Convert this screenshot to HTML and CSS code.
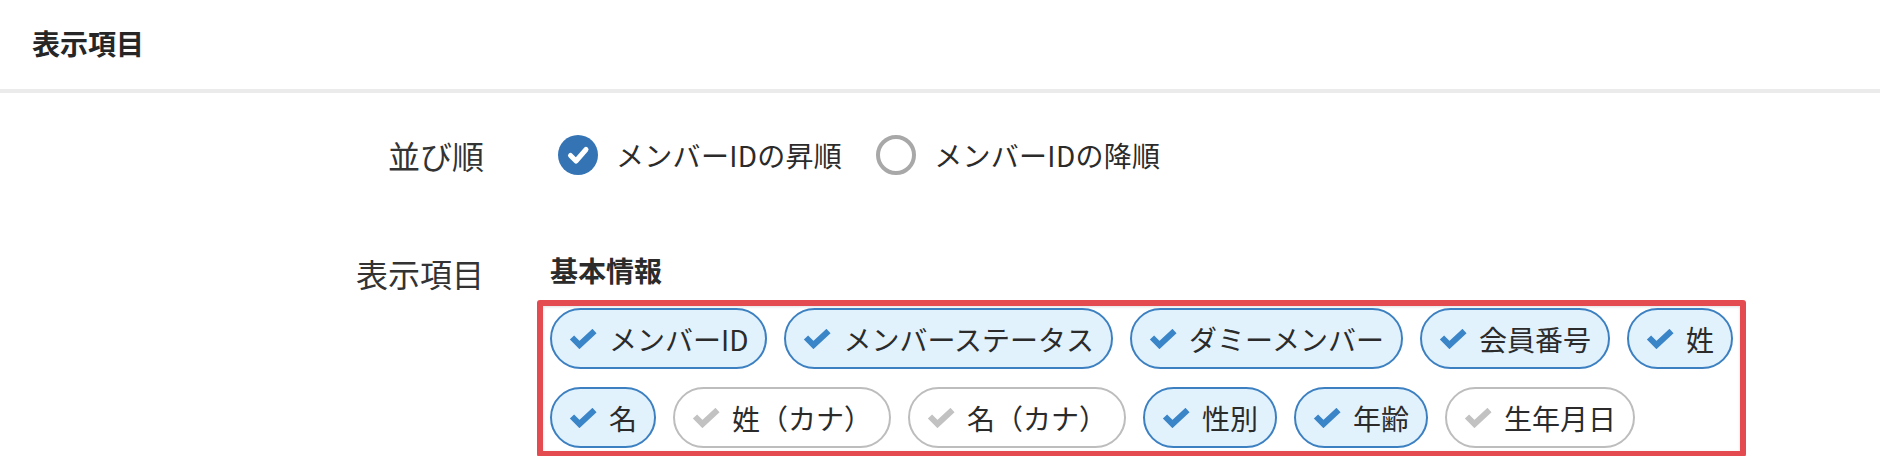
FILE: index.html
```html
<!DOCTYPE html>
<html lang="ja">
<head>
<meta charset="utf-8">
<title>表示項目</title>
<link rel="stylesheet" href="styles.css">
</head>
<body>
<div class="page">
  <header class="section-head">
    <h2 class="section-title">表示項目</h2>
  </header>
  <div class="form">
    <div class="form-row row-sort">
      <div class="form-label">並び順</div>
      <div class="form-field radios">
        <label class="radio">
          <span class="radio-mark checked">
            <svg viewBox="0 0 40 40" width="40" height="40"><polyline points="12.5,20.5 18,26 28,14.5" fill="none" stroke="#fff" stroke-width="5" stroke-linecap="round" stroke-linejoin="round"/></svg>
          </span>
          <span class="radio-text">メンバーIDの昇順</span>
        </label>
        <label class="radio">
          <span class="radio-mark"></span>
          <span class="radio-text">メンバーIDの降順</span>
        </label>
      </div>
    </div>
    <div class="form-row row-items">
      <div class="form-label label-items">表示項目</div>
      <div class="form-field">
        <div class="group-title">基本情報</div>
        <div class="chips">
          <span class="chip on"><svg class="tick" viewBox="0 0 28 20"><polyline points="3,8.5 10.5,16 25.5,2" /></svg>メンバーID</span>
          <span class="chip on"><svg class="tick" viewBox="0 0 28 20"><polyline points="3,8.5 10.5,16 25.5,2" /></svg>メンバーステータス</span>
          <span class="chip on"><svg class="tick" viewBox="0 0 28 20"><polyline points="3,8.5 10.5,16 25.5,2" /></svg>ダミーメンバー</span>
          <span class="chip on"><svg class="tick" viewBox="0 0 28 20"><polyline points="3,8.5 10.5,16 25.5,2" /></svg>会員番号</span>
          <span class="chip on"><svg class="tick" viewBox="0 0 28 20"><polyline points="3,8.5 10.5,16 25.5,2" /></svg>姓</span>
          <span class="chip on"><svg class="tick" viewBox="0 0 28 20"><polyline points="3,8.5 10.5,16 25.5,2" /></svg>名</span>
          <span class="chip"><svg class="tick" viewBox="0 0 28 20"><polyline points="3,8.5 10.5,16 25.5,2" /></svg>姓（カナ）</span>
          <span class="chip"><svg class="tick" viewBox="0 0 28 20"><polyline points="3,8.5 10.5,16 25.5,2" /></svg>名（カナ）</span>
          <span class="chip on"><svg class="tick" viewBox="0 0 28 20"><polyline points="3,8.5 10.5,16 25.5,2" /></svg>性別</span>
          <span class="chip on"><svg class="tick" viewBox="0 0 28 20"><polyline points="3,8.5 10.5,16 25.5,2" /></svg>年齢</span>
          <span class="chip"><svg class="tick" viewBox="0 0 28 20"><polyline points="3,8.5 10.5,16 25.5,2" /></svg>生年月日</span>
        </div>
      </div>
    </div>
  </div>
</div>
</body>
</html>
```
FILE: styles.css
```css
* { box-sizing: border-box; }
html, body {
  margin: 0;
  padding: 0;
  background: #ffffff;
}
body {
  font-family: "Noto Sans CJK JP", "Noto Sans", "Liberation Sans", sans-serif;
  color: #2b2b2b;
  width: 1880px;
  height: 456px;
  overflow: hidden;
}
.section-head {
  height: 93px;
  padding-left: 32px;
  display: flex;
  align-items: center;
  padding-bottom: 4px;
  border-bottom: 4px solid #ebebeb;
}
.section-title {
  margin: 0;
  font-size: 28px;
  font-weight: 700;
  line-height: 40px;
  color: #262626;
}
.form {
  display: flex;
  flex-direction: column;
}
.form-row {
  display: grid;
  grid-template-columns: 484px 1fr;
  column-gap: 66px;
}
.row-sort {
  padding-top: 42px;
  align-items: center;
}
.form-label {
  text-align: right;
  font-size: 32px;
  line-height: 40px;
  color: #333333;
}
.radios {
  display: flex;
  align-items: center;
  padding-left: 8px;
}
.radio {
  display: flex;
  align-items: center;
  gap: 18px;
  margin-right: 34px;
}
.radio-mark {
  width: 40px;
  height: 40px;
  border-radius: 50%;
  border: 4px solid #a8a8a8;
  display: block;
  flex: none;
}
.radio-mark.checked {
  border: none;
  background: #3474b4;
}
.radio-mark svg { display: block; }
.radio-text {
  font-size: 28px;
  line-height: 40px;
  color: #2b2b2b;
  letter-spacing: 0.3px;
}
.row-items {
  padding-top: 75px;
  align-items: start;
}
.label-items {
  margin-top: 3px;
}
.group-title {
  font-size: 28px;
  font-weight: 700;
  line-height: 40px;
  margin-bottom: 10px;
  color: #2b2b2b;
}
.chips {
  margin-left: -13px;
  width: 1209px;
  border: 6px solid #e34b50;
  border-radius: 3px;
  padding: 2px 6px 3px 7px;
  display: flex;
  flex-wrap: wrap;
  gap: 18px 17px;
  box-shadow: inset 0 1px 3px rgba(0, 0, 0, 0.12);
}
.chip {
  height: 61px;
  border: 2px solid #bdbdbd;
  border-radius: 31px;
  background: #ffffff;
  padding: 0 17px 0 17px;
  display: inline-flex;
  align-items: center;
  gap: 12px;
  font-size: 28px;
  line-height: 1;
  color: #2b2b2b;
  white-space: nowrap;
}
.chip.on {
  border-color: #3d80c2;
  background: #e1f2fd;
}
.tick {
  width: 28px;
  height: 20px;
  flex: none;
  fill: none;
  stroke: #c2c2c2;
  stroke-width: 6;
  stroke-linejoin: miter;
  stroke-linecap: butt;
}
.chip.on .tick {
  stroke: #3a84c8;
}
```
